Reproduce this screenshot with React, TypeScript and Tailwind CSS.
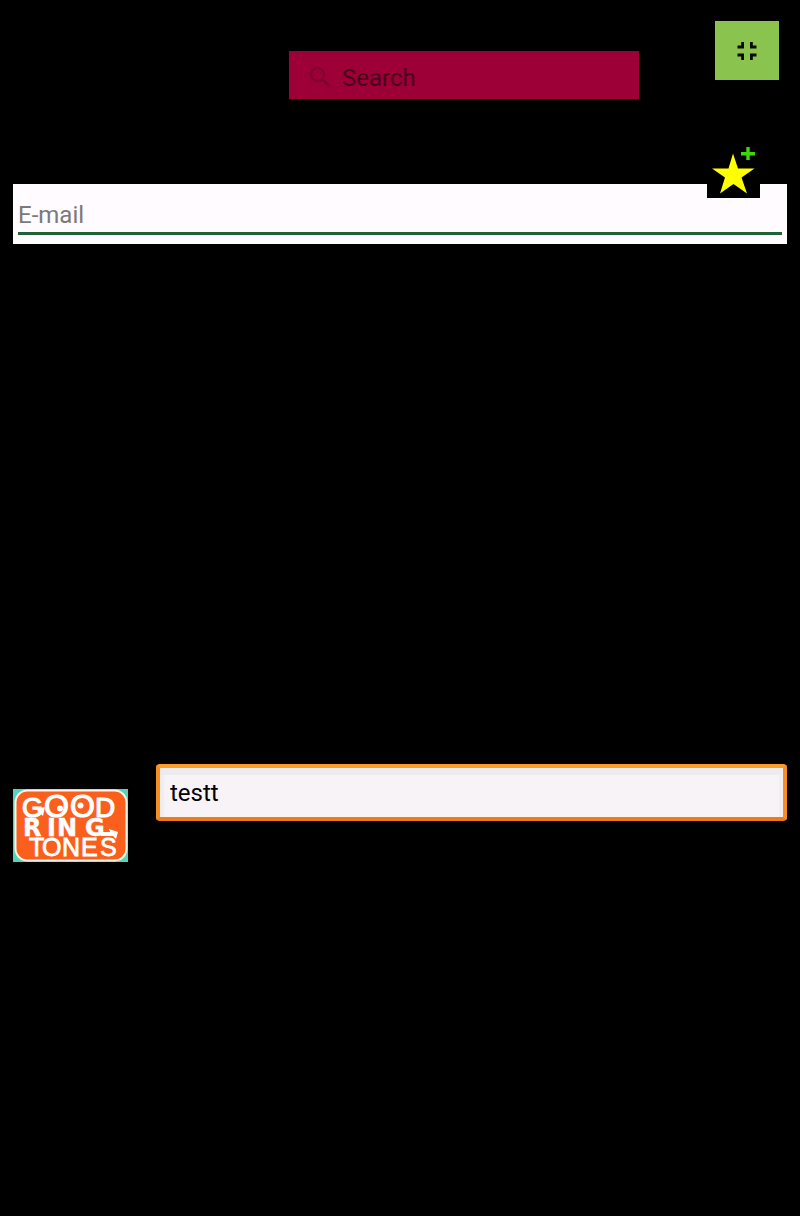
function CollapseIcon() {
  return (
    <svg viewBox="0 0 20 20" className="h-5 w-5" fill="none" stroke="#070b03" strokeWidth="2.800" aria-hidden="true">
      <path d="M5.600 1v5H.5M14.400 1v5h5.100M.5 14h5.100v5M19.500 14h-5.100v5" />
    </svg>
  );
}

function SearchIcon() {
  return (
    <svg viewBox="0 0 22 22" className="h-[22px] w-[22px]" fill="none" stroke="#7d002c" strokeWidth="2.200" aria-hidden="true">
      <circle cx="8.500" cy="7.500" r="6.500" />
      <path d="M13 12L21 19.500" strokeWidth="2.600" />
    </svg>
  );
}

function StarIcon() {
  return (
    <svg viewBox="0 0 53 54" className="h-[54px] w-[53px]" aria-hidden="true">
      <path fill="#ffff00" d="M26 9.500L31 24.500H47.500L34.500 33.500L40 49.500L26.500 40L13 49.500L18 33.500L5 24.500H21.500Z" />
      <path fill="#3fd70c" d="M39.300 3h3.400v5H48v3.600h-5.300V16h-3.400v-4.400H34V8h5.300z" />
    </svg>
  );
}

function Logo() {
  return (
    <svg viewBox="0 0 115 73" className="h-[73px] w-[115px] shrink-0" role="img" aria-label="Good Ring Tones">
      <rect width="115" height="73" fill="#56d3bb" />
      <rect x="2.500" y="1.500" width="111" height="70" rx="12" fill="#fb5f1e" stroke="#fff4ea" strokeWidth="2" />
      <g fill="#ffffff" stroke="#ffffff">
        <text y="28" strokeWidth="1.200" fontFamily="Liberation Sans, sans-serif">
          <tspan x="9" fontSize="27">G</tspan>
          <tspan x="31" fontSize="32">O</tspan>
          <tspan x="57" fontSize="32">O</tspan>
          <tspan x="82" fontSize="28">D</tspan>
        </text>
        <text x="10 34 44 72" y="47" fontSize="24" strokeWidth="0.400" fontFamily="DejaVu Sans, sans-serif" fontWeight="700">
          RING
        </text>
        <text x="16 29 49 68 87" y="67" fontSize="25" strokeWidth="0.800" fontFamily="Liberation Sans, sans-serif">
          TONES
        </text>
      </g>
      <g fill="#ffffff">
        <path d="M23 20l9-2-2 9z" />
        <path d="M88 43h9l-1-3 9 3-2 7-3-3H88z" />
        <circle cx="47" cy="19.500" r="3" />
        <circle cx="67.500" cy="16.500" r="3" />
      </g>
    </svg>
  );
}

export default function App() {
  return (
    <main className="min-h-screen bg-black font-[Roboto,sans-serif] text-2xl">
      <header className="flex items-start justify-end gap-[76px] pt-[21px] pr-[21px]">
        <label className="mt-[30px] flex h-12 w-[350px] min-w-0 items-center gap-[11px] bg-[#9c0037] pt-[6px] pl-5">
          <SearchIcon />
          <input
            type="search"
            aria-label="Search"
            placeholder="Search"
            className="min-w-0 flex-1 bg-transparent text-[#4b001b] outline-none placeholder:text-[#4b001b]"
          />
        </label>
        <button type="button" aria-label="Exit full screen" className="flex h-[59px] w-16 items-center justify-center bg-[#8bc34f]">
          <CollapseIcon />
        </button>
      </header>

      <section className="relative mx-[13px] mt-[85px] bg-[#fffbff] px-[5px] pt-3 pb-[9px]">
        <input
          type="email"
          aria-label="E-mail"
          placeholder="E-mail"
          className="block h-[39px] w-full border-b-3 border-[#1f6237] bg-transparent pt-0.5 text-[#333333] outline-none placeholder:text-[#7b797b]"
        />
        <button type="button" aria-label="Add to favorites" className="absolute -top-10 right-[27px] bg-black">
          <StarIcon />
        </button>
      </section>

      <section className="mx-[13px] mt-[520px] flex items-start gap-7 pb-6">
        <div className="pt-[25px]">
          <Logo />
        </div>
        <input
          type="text"
          aria-label="Ringtone name"
          defaultValue="testt"
          className="h-[57px] min-w-0 flex-1 rounded-[4px] border-4 border-t-[#fb9c2b] border-r-[#f58d24] border-b-[#f07a14] border-l-[#f58d24] bg-[#f7f3f7] px-[10px] text-black shadow-[inset_0_7px_0_#eeebee,inset_4px_0_0_#f1eef1,inset_-4px_0_0_#f1eef1] outline-none"
        />
      </section>
    </main>
  );
}
